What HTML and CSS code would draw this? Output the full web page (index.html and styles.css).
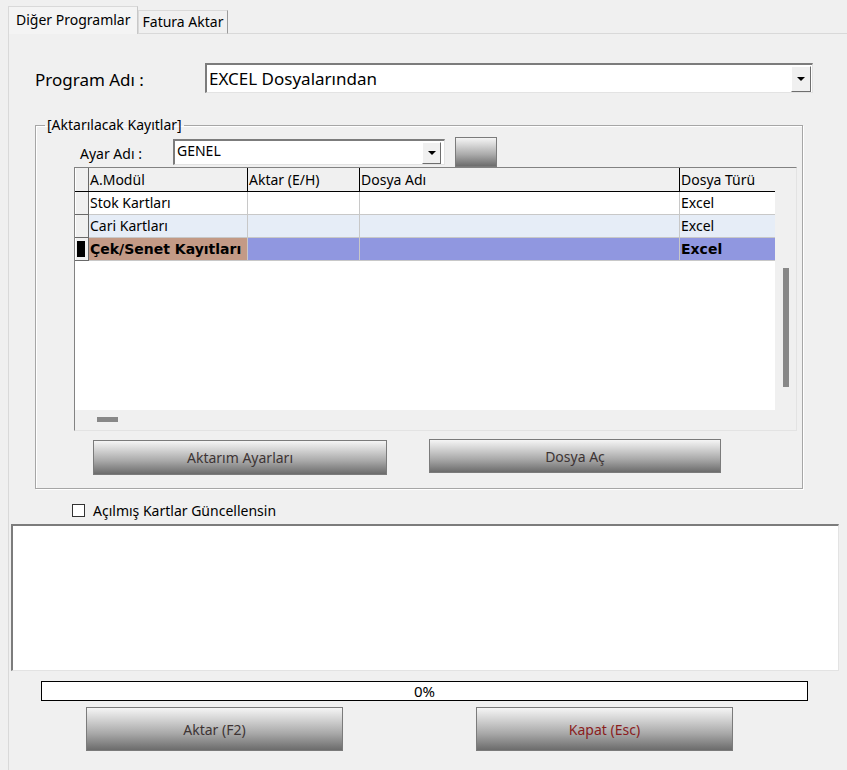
FILE: index.html
```html
<!DOCTYPE html>
<html lang="tr">
<head>
<meta charset="utf-8">
<title>Diğer Programlar</title>
<link rel="stylesheet" href="styles.css">
</head>
<body>
<div class="tabs">
  <div class="tab active">Diğer Programlar</div>
  <div class="tab">Fatura Aktar</div>
  <div class="tab-fill"></div>
</div>
<div class="panel">
  <div class="prog-row">
    <span class="prog-label">Program Adı :</span>
    <div class="combo combo-big">
      <span class="combo-text">EXCEL Dosyalarından</span>
      <span class="drop"><i class="arrow"></i></span>
    </div>
  </div>

  <fieldset class="group">
    <legend>[Aktarılacak Kayıtlar]</legend>
    <div class="ayar-row">
      <span class="ayar-label">Ayar Adı :</span>
      <div class="combo combo-small">
        <span class="combo-text">GENEL</span>
        <span class="drop"><i class="arrow"></i></span>
      </div>
      <button class="btn btn-tiny" type="button"></button>
    </div>

    <div class="grid-wrap">
      <div class="grid-body">
        <table class="grid">
          <colgroup>
            <col class="c-ind"><col class="c-mod"><col class="c-akt"><col class="c-dos"><col class="c-tur">
          </colgroup>
          <thead>
            <tr><th class="ind"></th><th>A.Modül</th><th>Aktar (E/H)</th><th>Dosya Adı</th><th>Dosya Türü</th></tr>
          </thead>
          <tbody>
            <tr class="r-white"><td class="ind"></td><td>Stok Kartları</td><td></td><td></td><td>Excel</td></tr>
            <tr class="r-alt"><td class="ind"></td><td>Cari Kartları</td><td></td><td></td><td>Excel</td></tr>
            <tr class="r-sel"><td class="ind"><span class="cur"></span></td><td class="sel-first">Çek/Senet Kayıtları</td><td></td><td></td><td>Excel</td></tr>
          </tbody>
        </table>
      </div>
      <div class="vscroll"><span class="vthumb"></span></div>
      <div class="hscroll"><span class="hthumb"></span></div>
      <div class="corner"></div>
    </div>

    <div class="btn-row">
      <button class="btn btn-mid btn-a" type="button">Aktarım Ayarları</button>
      <button class="btn btn-mid btn-b" type="button">Dosya Aç</button>
    </div>
  </fieldset>

  <label class="check-row"><span class="check"></span>Açılmış Kartlar Güncellensin</label>

  <div class="memo"></div>

  <div class="progress">0%</div>

  <div class="bottom-row">
    <button class="btn btn-big" type="button">Aktar (F2)</button>
    <button class="btn btn-big kapat" type="button">Kapat (Esc)</button>
  </div>
</div>
</body>
</html>
```
FILE: styles.css
```css
* { box-sizing: border-box; }

html, body {
  margin: 0;
  padding: 0;
  background: #f0f0f0;
  font-family: "Noto Sans", "Open Sans", "DejaVu Sans", sans-serif;
  color: #000;
  width: 847px;
  height: 770px;
  overflow: hidden;
}

/* ---------- tabs ---------- */
.tabs {
  display: flex;
  align-items: flex-end;
  height: 34px;
  padding-left: 8px;
}
.tab {
  font-size: 14px;
  line-height: 22px;
  height: 24px;
  padding: 0 4px 0 4px;
  border: 1px solid #d9d9d9;
  border-right: 1px solid #9a9a9a;
  border-bottom: 1px solid #d9d9d9;
  background: #f0f0f0;
  white-space: nowrap;
}
.tab.active {
  height: 28px;
  line-height: 25px;
  padding: 0 6px 0 7px;
  border-color: #d9d9d9;
  border-bottom: none;
  border-right: 1px solid #c8c8c8;
  background: #f4f4f4;
}
.tab-fill {
  flex: 1;
  height: 1px;
  background: #d9d9d9;
}

/* ---------- panel ---------- */
.panel {
  height: 736px;
  margin-left: 8px;
  border-left: 1px solid #d9d9d9;
  display: flex;
  flex-direction: column;
  align-items: flex-start;
}

.prog-row {
  display: flex;
  align-items: center;
  margin-top: 29px;
  margin-left: 26px;
}
.prog-label {
  width: 170px;
  font-size: 17px;
  padding-top: 3px;
}

/* ---------- combo ---------- */
.combo {
  display: flex;
  align-items: center;
  background: #fff;
  border-top: 2px solid #7c7c7c;
  border-left: 2px solid #7c7c7c;
  border-right: 1px solid #e3e3e3;
  border-bottom: 1px solid #e3e3e3;
}
.combo-text { flex: 1; white-space: nowrap; }
.combo-big { width: 608px; height: 30px; }
.combo-big .combo-text { font-size: 17px; padding-left: 2px; }
.combo-small { width: 272px; height: 26px; }
.combo-small .combo-text { font-size: 14px; padding-left: 2px; padding-bottom: 4px; }

.drop {
  display: flex;
  align-items: center;
  justify-content: center;
  background: #f0f0f0;
  border-top: 1px solid #fff;
  border-left: 1px solid #fff;
  border-right: 1px solid #6e6e6e;
  border-bottom: 1px solid #6e6e6e;
}
.combo-big .drop { width: 20px; height: 26px; margin-right: 1px; }
.combo-small .drop { width: 19px; height: 22px; margin-right: 3px; }
.arrow {
  width: 0;
  height: 0;
  border-left: 4px solid transparent;
  border-right: 4px solid transparent;
  border-top: 4px solid #000;
}

/* ---------- group box ---------- */
.group {
  margin: 24px 0 0 26px;
  padding: 0 0 13px 0;
  width: 768px;
  border: 1px solid #a6a6a6;
  box-shadow: inset 1px 1px 0 #fff, 1px 1px 0 #fff;
  min-width: 0;
}
.group legend {
  font-size: 14px;
  line-height: 16px;
  margin-left: 9px;
  padding: 0 2px;
}

.ayar-row {
  display: flex;
  align-items: center;
  margin: 4px 0 0 44px;
  height: 30px;
}
.ayar-label {
  width: 93px;
  font-size: 14px;
  padding-top: 3px;
}

/* ---------- buttons ---------- */
.btn {
  font-family: inherit;
  border: 1px solid #7b7b7b;
  background: linear-gradient(to bottom, #f5f5f5 0%, #d6d6d6 25%, #a9a9a9 60%, #6c6c6c 100%);
  color: #3d3434;
  padding: 0;
  cursor: default;
}
.btn-tiny { width: 42px; height: 30px; margin-left: 10px; }

/* ---------- grid ---------- */
.grid-wrap {
  margin: 0 0 0 38px;
  width: 723px;
  height: 264px;
  display: grid;
  grid-template-columns: 700px 21px;
  grid-template-rows: 242px 20px;
  border-top: 1px solid #828282;
  border-left: 1px solid #828282;
  border-right: 1px solid #e3e3e3;
  border-bottom: 1px solid #e3e3e3;
  background: #f0f0f0;
}
.grid-body { background: #fff; overflow: hidden; }
.grid {
  border-collapse: collapse;
  table-layout: fixed;
  width: 700px;
  font-size: 14px;
}
.c-ind { width: 13px; }
.c-mod { width: 159px; }
.c-akt { width: 112px; }
.c-dos { width: 320px; }
.c-tur { width: 96px; }

.grid th, .grid td {
  height: 23px;
  padding: 0 0 0 1px;
  text-align: left;
  font-weight: normal;
  white-space: nowrap;
  overflow: hidden;
  vertical-align: middle;
  line-height: 18px;
}
.grid th {
  background: #f0f0f0;
  border-right: 1px solid #000;
  border-bottom: 1px solid #000;
  padding-top: 1px;
}
.grid th:last-child { border-right: none; }
.grid td {
  border-right: 1px solid #c8c8c8;
  border-bottom: 1px solid #c8c8c8;
}
.grid td:last-child { border-right: none; }
.grid .ind {
  background: #f0f0f0;
  padding: 0;
  border-left: 1px solid #fff;
  border-right: 1px solid #696969;
  border-bottom: 1px solid #696969;
}
.grid th.ind { border-right: 1px solid #696969; border-bottom: 1px solid #000; }
.r-white td { background: #fff; }
.r-alt td { background: #e6edf7; }
.r-sel td {
  background: #9097e0;
  font-weight: bold;
  font-family: "DejaVu Sans", "Noto Sans", sans-serif;
  font-size: 14px;
}
.r-sel td.sel-first { background: #c39a86; }
.r-white td.ind, .r-alt td.ind, .r-sel td.ind { background: #f0f0f0; }
.cur {
  display: block;
  width: 8px;
  height: 16px;
  margin-left: 1px;
  background: #000;
}

.vscroll { background: #f0f0f0; padding: 100px 0 0 8px; }
.vthumb { display: block; width: 6px; height: 119px; background: #888; }
.hscroll { background: #f0f0f0; padding: 7px 0 0 22px; }
.hthumb { display: block; width: 21px; height: 5px; background: #888; }
.corner { background: #f0f0f0; }

.btn-row {
  display: flex;
  align-items: flex-start;
  margin: 8px 0 0 57px;
}
.btn-mid { font-size: 14px; }
.btn-a { width: 294px; height: 35px; margin-top: 1px; }
.btn-b { width: 292px; height: 34px; margin-left: 42px; }

/* ---------- check ---------- */
.check-row {
  display: flex;
  align-items: center;
  margin: 12px 0 0 63px;
  font-size: 14px;
  height: 18px;
}
.check {
  width: 13px;
  height: 13px;
  background: #fff;
  border: 1px solid #333;
  margin-right: 8px;
}

/* ---------- memo ---------- */
.memo {
  margin: 5px 0 0 2px;
  width: 828px;
  height: 147px;
  background: #fff;
  border-top: 2px solid #7c7c7c;
  border-left: 2px solid #7c7c7c;
  border-right: 1px solid #e3e3e3;
  border-bottom: 1px solid #e3e3e3;
}

/* ---------- progress ---------- */
.progress {
  margin: 10px 0 0 32px;
  width: 767px;
  height: 20px;
  border: 1px solid #000;
  background: #fff;
  font-size: 15px;
  line-height: 18px;
  text-align: center;
}

.bottom-row {
  display: flex;
  margin: 6px 0 0 77px;
}
.btn-big { width: 257px; height: 44px; font-size: 14px; }
.btn-big.kapat { margin-left: 133px; color: #8a1d1d; }
```
